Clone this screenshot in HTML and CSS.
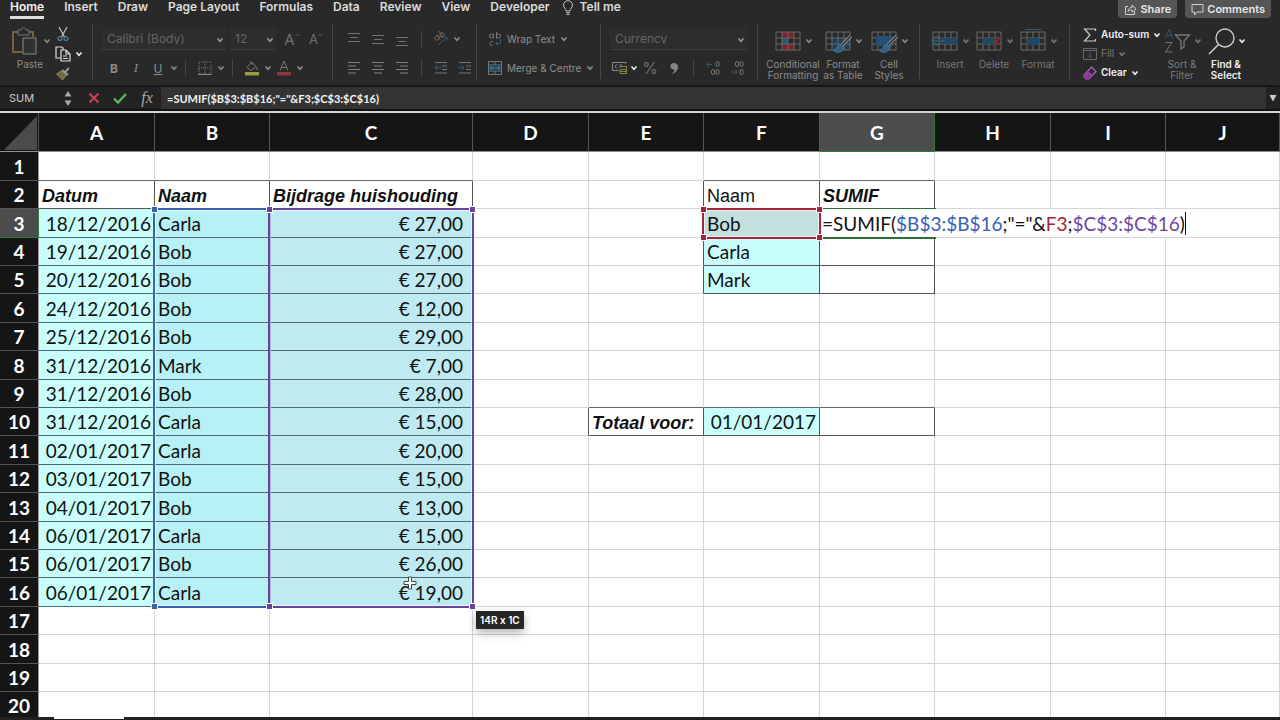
FILE: index.html
```html
<!DOCTYPE html>
<html lang="en">
<head>
<meta charset="utf-8">
<title>Workbook</title>
<link rel="stylesheet" href="styles.css">
</head>
<body>
<svg class="defs" aria-hidden="true">
  <symbol id="chev" viewBox="0 0 8 8"><path d="M1.500 2.500 4 5.200 6.500 2.500" fill="none" stroke="currentColor" stroke-width="1.600"/></symbol>
  <symbol id="grid" viewBox="0 0 28 24"><path d="M2 3h24v18H2zM2 9h24M2 15h24M8 3v18M14 3v18M20 3v18" fill="none" stroke="#6b6a66" stroke-width="1"/></symbol>
  <symbol id="brush" viewBox="0 0 28 24"><path d="M27 7 18 16" stroke="#8a8a8a" stroke-width="3.500"/><path d="M27 7 18 16" stroke="#2a2a2a" stroke-width="1.500"/><path d="M17.500 16c-4-1-4 4-8 5.500 4 3.500 9.500 1.500 10-3z" fill="#2f5f86" stroke="#4a7898" stroke-width="1"/></symbol>
</svg>

<nav class="tabs">
  <a class="tab active" href="#">Home</a><a class="tab" href="#">Insert</a><a class="tab" href="#">Draw</a><a class="tab" href="#">Page Layout</a><a class="tab" href="#">Formulas</a><a class="tab" href="#">Data</a><a class="tab" href="#">Review</a><a class="tab" href="#">View</a><a class="tab" href="#">Developer</a>
  <a class="tab tell" href="#"><svg width="12" height="16" viewBox="0 0 12 16"><path d="M4 11C4 9 1.500 8 1.500 5.200a4.500 4.500 0 0 1 9 0C10.500 8 8 9 8 11zM4 12.800h4M4.500 14.500h3" fill="none" stroke="#c4c4c4"/></svg>Tell me</a>
  <span class="grow"></span>
  <button class="pill"><svg width="13" height="13" viewBox="0 0 13 13"><path d="M4 3.500H1.500v8h9V8M4 8.500c.3-3 2-4 4-4V2l4 3.800-4 3.500V7C6 7 5 7.300 4 8.500z" fill="none" stroke="#d0d0d0"/></svg>Share</button>
  <button class="pill"><svg width="13" height="13" viewBox="0 0 13 13"><path d="M1 1.500h11v7.500H6l-2.500 3V9H1z" fill="none" stroke="#d0d0d0"/></svg>Comments</button>
</nav>

<div class="ribbon">
  <section class="group clip">
    <button class="big paste"><span class="pic"><svg width="30" height="30" viewBox="0 0 30 30"><path d="M12 26H3V6h20v5" fill="none" stroke="#76623a" stroke-width="2"/><path d="M8 9V4h3c0-3 5-3 5 0h3v5z" fill="#292929" stroke="#777"/><path d="M13 12h13v16H13z" fill="#303030" stroke="#8a8a8a"/></svg><svg class="chev"><use href="#chev"/></svg></span>Paste</button>
    <div class="stack">
      <button aria-label="Cut"><svg width="16" height="16" viewBox="0 0 16 16"><path d="M4 1l5.500 10M12 1 6.500 11" stroke="#bbb" stroke-width="1.300"/><g fill="none" stroke="#4179a5" stroke-width="1.400"><circle cx="5" cy="12.500" r="1.900"/><circle cx="11" cy="12.500" r="1.900"/></g></svg></button>
      <button class="on" aria-label="Copy"><svg width="16" height="16" viewBox="0 0 16 16"><path d="M6 12H1V1h6l1 1v2M6 4h5l4 4v7H6zM11 4v4h4M8 10h4M8 12.500h5" fill="none" stroke="#ddd" stroke-width="1.200"/></svg><svg class="chev"><use href="#chev"/></svg></button>
      <button aria-label="Format painter"><svg width="16" height="14" viewBox="0 0 16 14"><path d="M14 1 10 5M7 3l6 5" stroke="#999" stroke-width="2"/><path d="M6 4 1.500 7l6 6 4-5z" fill="#75683f" stroke="#8f8360"/></svg></button>
    </div>
  </section>

  <section class="group font">
    <div class="line">
      <label class="combo wide"><select aria-label="Font"><option>Calibri (Body)</option></select><svg class="chev"><use href="#chev"/></svg></label>
      <label class="combo size"><select aria-label="Font size"><option>12</option></select><svg class="chev"><use href="#chev"/></svg></label>
      <button class="w24 glyph" aria-label="Grow font">A<svg width="5" height="12" viewBox="0 0 5 12"><path d="M.5 3 2.500 1l2 2" fill="none" stroke="#426b86"/></svg></button>
      <button class="w24 glyph small" aria-label="Shrink font">A<svg width="5" height="12" viewBox="0 0 5 12"><path d="M.5 1 2.500 3l2-2" fill="none" stroke="#426b86"/></svg></button>
    </div>
    <div class="line">
      <button class="w24"><b>B</b></button><button class="w20"><i class="serif">I</i></button><button class="w24"><u>U</u></button><svg class="chev"><use href="#chev"/></svg><span class="bar"></span>
      <button class="w24" aria-label="Borders"><svg width="14" height="14" viewBox="0 0 14 14"><path d="M1 1h12v12H1zM7 1v12M1 7h12" fill="none" stroke="#777" stroke-dasharray="1 1"/><path d="M0 13.500h14" stroke="#888"/></svg></button><svg class="chev"><use href="#chev"/></svg><span class="bar"></span>
      <button class="w24" aria-label="Fill colour"><svg width="16" height="16" viewBox="0 0 16 16"><path d="M3 7.500 8 2l4 4.500-5 4zM6 1l3 4M13 7v3" fill="none" stroke="#777"/><path d="M1 12h14v3.500H1z" fill="#9b9c3e"/></svg></button><svg class="chev"><use href="#chev"/></svg>
      <button class="w24 fcol" aria-label="Font colour"><svg width="16" height="16" viewBox="0 0 16 16"><path d="m4 10.500 4-9.500 4 9.500M5.300 7.500h5.400" fill="none" stroke="#777"/><path d="M1 12h14v3.500H1z" fill="#8d363b"/></svg></button><svg class="chev"><use href="#chev"/></svg>
    </div>
  </section>

  <section class="group align">
    <div class="line">
      <button class="w24" aria-label="Top"><svg width="14" height="14" viewBox="0 0 14 14"><path d="M1 1.500h12M3 5.500h8M1 9.500h12" stroke="#747474"/></svg></button><button class="w24" aria-label="Middle"><svg width="14" height="14" viewBox="0 0 14 14"><path d="M1 3.500h12M3 7.500h8M1 11.500h12" stroke="#747474"/></svg></button><button class="w24" aria-label="Bottom"><svg width="14" height="14" viewBox="0 0 14 14"><path d="M1 5.500h12M3 9.500h8M1 13.500h12" stroke="#747474"/></svg></button><span class="bar"></span>
      <button class="w24" aria-label="Orientation"><svg width="16" height="16" viewBox="0 0 16 16"><g fill="none" stroke="#706b5b"><circle cx="4" cy="7" r="2.200"/><path d="M4 4.200l3 4"/><circle cx="9" cy="4" r="2.200"/><path d="M6 0l3.500 6"/></g><path d="M5 14 14 6M10.500 6H14v3.500" fill="none" stroke="#365a72"/></svg></button><svg class="chev"><use href="#chev"/></svg>
    </div>
    <div class="line">
      <button class="w24" aria-label="Left"><svg width="14" height="14" viewBox="0 0 14 14"><path d="M1 1.500h12M1 5h8M1 8.500h12M1 12h8" stroke="#808080"/></svg></button><button class="w24" aria-label="Centre"><svg width="14" height="14" viewBox="0 0 14 14"><path d="M1 1.500h12M3 5h8M1 8.500h12M3 12h8" stroke="#808080"/></svg></button><button class="w24" aria-label="Right"><svg width="14" height="14" viewBox="0 0 14 14"><path d="M1 1.500h12M5 5h8M1 8.500h12M5 12h8" stroke="#808080"/></svg></button><span class="bar"></span>
      <button class="w24" aria-label="Outdent"><svg width="14" height="14" viewBox="0 0 14 14"><path d="M1 1.500h12M8 5h5M8 8.500h5M1 12h12" stroke="#777"/><path d="M7 6.700H1M3.500 4 1 6.700l2.500 2.700" fill="none" stroke="#33617c"/></svg></button><button class="w24" aria-label="Indent"><svg width="14" height="14" viewBox="0 0 14 14"><path d="M1 1.500h12M8 5h5M8 8.500h5M1 12h12" stroke="#777"/><path d="M0 6.700h6M3.500 4 6 6.700 3.500 9.400" fill="none" stroke="#33617c"/></svg></button>
    </div>
  </section>

  <section class="group wrap">
    <div class="line"><button class="txt"><svg width="14" height="16" viewBox="0 0 14 16"><g fill="none" stroke="#777"><circle cx="3.500" cy="5" r="2"/><path d="M5.500 3v4.500M8.500 1v6.500"/><circle cx="10.500" cy="5" r="2"/><path d="M5 10.500c-4-1-4 5 0 4"/></g><path d="M12.500 8v4.500H8M10 10.500l-2 2 2 2" fill="none" stroke="#33617c"/></svg>Wrap Text<svg class="chev"><use href="#chev"/></svg></button></div>
    <div class="line"><button class="txt"><svg width="14" height="14" viewBox="0 0 14 14"><path d="M.5.5h13v13H.5zM.5 4h13M.5 10h13M7 .5V4M7 10v3.500" fill="none" stroke="#707c82"/><path d="M1 4.500h12v5H1z" fill="#1e435a"/><path d="M2 7h10M4 5 2 7l2 2M10 5l2 2-2 2" fill="none" stroke="#4e85a3"/></svg>Merge &amp; Centre<svg class="chev"><use href="#chev"/></svg></button></div>
  </section>

  <section class="group number">
    <div class="line"><label class="combo full"><select aria-label="Number format"><option>Currency</option></select><svg class="chev"><use href="#chev"/></svg></label></div>
    <div class="line">
      <button class="w20" aria-label="Currency"><svg width="16" height="14" viewBox="0 0 16 14"><path d="M14 3V1.500H.5v8H7M5.500 4c-3-1-3 4 0 3M8 7V4h2" fill="none" stroke="#8a8a8a"/><path d="M9 5.500h5.500v7H8v-4h6.500M8 10.500h6" fill="none" stroke="#8d8450"/></svg></button><svg class="chev on"><use href="#chev"/></svg>
      <button class="w24 glyph pct">%</button><button class="w24 comma" aria-label="Comma"><svg width="9" height="13" viewBox="0 0 9 13"><path d="M1 12c2.500-1.500 3.500-3 3.500-4.500C-1 8-1 1 4 1c6 0 5.500 9.500-3 11z" fill="#858585"/></svg></button><span class="bar"></span>
      <button class="w24 dec" aria-label="More decimals"><svg width="14" height="16" viewBox="0 0 14 16"><path d="M6 4.500H1M3 2 1 4.500 3 7" fill="none" stroke="#33617c"/><g fill="none" stroke="#777"><rect x="10" y="1.500" width="3" height="5" rx="1.500"/><rect x="5.500" y="9.500" width="3" height="5" rx="1.500"/><rect x="10" y="9.500" width="3" height="5" rx="1.500"/></g></svg></button><button class="w24 dec" aria-label="Fewer decimals"><svg width="14" height="16" viewBox="0 0 14 16"><path d="M1 12h6M5 9.500 7 12l-2 2.500" fill="none" stroke="#33617c"/><g fill="none" stroke="#777"><rect x="5.500" y="1.500" width="3" height="5" rx="1.500"/><rect x="10" y="1.500" width="3" height="5" rx="1.500"/><rect x="10" y="9.500" width="3" height="5" rx="1.500"/></g></svg></button>
    </div>
  </section>

  <section class="group styles">
    <button class="big cond"><span class="pic"><svg width="28" height="24"><path d="M8 3h12v6H8zM8 15h12v6H8z" fill="#7d202b"/><path d="M8 9h6v6H8z" fill="#225777"/><use href="#grid"/></svg><svg class="chev"><use href="#chev"/></svg></span>Conditional<br>Formatting</button>
    <button class="big mid"><span class="pic"><svg width="28" height="24"><path d="M8 9h18v12H8z" fill="#1b3f5c"/><use href="#grid"/><use href="#brush"/></svg><svg class="chev"><use href="#chev"/></svg></span>Format<br>as Table</button>
    <button class="big mid"><span class="pic"><svg width="28" height="24"><use href="#grid"/><path d="M6 7h17v10H6z" fill="#254f75"/><use href="#brush"/></svg><svg class="chev"><use href="#chev"/></svg></span>Cell<br>Styles</button>
  </section>

  <section class="group cells dim">
    <button class="big mid"><span class="pic"><svg width="28" height="24"><use href="#grid"/><path d="M10 9h17v6H10z" fill="#204865"/><path d="M14 12H1M6 7l-5 5 5 5" fill="none" stroke="#2d5f7b" stroke-width="1.500"/></svg><svg class="chev"><use href="#chev"/></svg></span>Insert</button>
    <button class="big mid"><span class="pic"><svg width="28" height="24"><use href="#grid"/><path d="M7 9h12v6H7z" fill="#204865"/><path d="m18 8 8 9m0-9-8 9" stroke="#722b37" stroke-width="1.500"/></svg><svg class="chev"><use href="#chev"/></svg></span>Delete</button>
    <button class="big mid"><span class="pic"><svg width="28" height="24"><use href="#grid"/><path d="M8 9h12v7H8z" fill="#204865"/><path d="M6 .5h16" stroke="#2d5f7b"/></svg><svg class="chev"><use href="#chev"/></svg></span>Format</button>
  </section>

  <section class="group edit">
    <div class="actions">
      <button class="txt on"><svg width="14" height="14" viewBox="0 0 14 14"><path d="M12.500 3V1H1.500L7 7l-5.500 6h11v-2" fill="none" stroke="#ccc" stroke-width="1.200"/></svg>Auto-sum<svg class="chev"><use href="#chev"/></svg></button>
      <button class="txt dim"><svg width="14" height="14" viewBox="0 0 14 14"><path d="M.5 1.500h13v11H.5zM.5 3.500h13" fill="none" stroke="#686868"/><path d="M7 4.500v6M5 8.500l2 2 2-2" fill="none" stroke="#35607b"/></svg>Fill<svg class="chev"><use href="#chev"/></svg></button>
      <button class="txt on"><svg width="14" height="14" viewBox="0 0 14 14"><path d="M8.500 1 13 5.500 6 13H3L1 10.500V9z" fill="none" stroke="#b06ab8" stroke-width="1.200"/><path d="m5 4.800 5 4L6 13H3L1 10.500V9z" fill="#8f389c"/></svg>Clear<svg class="chev"><use href="#chev"/></svg></button>
    </div>
    <button class="big mid dim"><span class="pic"><svg width="28" height="26" viewBox="0 0 28 26"><path d="m2 11 4-10 4 10M3.500 7.500h5" fill="none" stroke="#32596f"/><path d="M2.500 14.500h6.500L2.500 24H9.500" fill="none" stroke="#777"/><path d="M12.500 7h14l-5.500 6v6l-3 2v-8z" fill="none" stroke="#777" stroke-width="1.300"/></svg><svg class="chev"><use href="#chev"/></svg></span>Sort &amp;<br>Filter</button>
    <button class="big mid on"><span class="pic"><svg width="28" height="28" viewBox="0 0 28 28"><circle cx="18" cy="11" r="9" fill="none" stroke="#ccc" stroke-width="1.400"/><path d="M11.500 17.500 2 27" stroke="#ccc" stroke-width="1.600"/></svg><svg class="chev"><use href="#chev"/></svg></span>Find &amp;<br>Select</button>
  </section>
</div>

<div class="fbar">
  <div class="namebox"><input aria-label="Name box" value="SUM"><svg width="8" height="17" viewBox="0 0 8 17"><path d="M4 1l3.500 5.500h-7zM4 16 .5 10.500h7z" fill="#aaa"/></svg></div>
  <button aria-label="Cancel"><svg width="12" height="12" viewBox="0 0 12 12"><path d="m1.500 1.500 9 9m0-9-9 9" stroke="#c9414d" stroke-width="2.200"/></svg></button>
  <button aria-label="Enter"><svg width="14" height="12" viewBox="0 0 14 12"><path d="m1 6.500 4 4L13 2" fill="none" stroke="#5cb85a" stroke-width="2.400"/></svg></button>
  <button class="fx" aria-label="Insert function">fx</button>
  <input class="formula" aria-label="Formula" value='=SUMIF($B$3:$B$16;"="&amp;F3;$C$3:$C$16)'>
  <button class="expand" aria-label="Expand"><svg width="8" height="8" viewBox="0 0 8 8"><path d="M.5 1h7L4 7.500z" fill="#ccc"/></svg></button>
</div>

<main class="sheet">
<table>
<colgroup><col class="c0"><col class="even"><col class="odd"><col class="c3"><col class="even"><col class="odd"><col class="even"><col class="odd"><col class="even"><col class="odd"><col></colgroup>
<thead><tr><th class="corner"><svg width="33" height="34" viewBox="0 0 33 34"><path d="M33 0v34H0z" fill="#4b4b4b"/></svg></th><th>A</th><th>B</th><th>C</th><th>D</th><th>E</th><th>F</th><th class="cur">G</th><th>H</th><th>I</th><th>J</th></tr></thead>
<tbody>
<tr><th>1</th><td class="u"></td><td class="u"></td><td class="u"></td><td></td><td></td><td class="u"></td><td class="u"></td><td></td><td></td><td></td></tr>
<tr class="titles"><th>2</th><td class="k">Datum</td><td class="k">Naam</td><td class="k">Bijdrage huishouding</td><td></td><td class="s"></td><td class="k plain">Naam</td><td class="k">SUMIF</td><td></td><td></td><td></td></tr>
<tr><th class="cur">3</th><td class="a">18/12/2016</td><td class="b">Carla<span class="range blue"><i></i><i></i><i></i><i></i></span></td><td class="c">€ 27,00<span class="range purple"><i></i><i></i><i></i><i></i></span></td><td></td><td class="s"></td><td class="f picked">Bob<span class="range red"><i></i><i></i><i></i><i></i></span></td><td class="editing" colspan="4"><span class="caret">=SUMIF(<span class="tb">$B$3:$B$16</span>;"="&amp;<span class="tr">F3</span>;<span class="tp">$C$3:$C$16</span>)</span><span class="cellframe"></span></td></tr>
<tr><th>4</th><td class="a">19/12/2016</td><td class="b">Bob</td><td class="c">€ 27,00</td><td></td><td class="s"></td><td class="f">Carla</td><td class="k"></td><td></td><td></td><td></td></tr>
<tr><th>5</th><td class="a">20/12/2016</td><td class="b">Bob</td><td class="c">€ 27,00</td><td></td><td class="s"></td><td class="f">Mark</td><td class="k"></td><td></td><td></td><td></td></tr>
<tr><th>6</th><td class="a">24/12/2016</td><td class="b">Bob</td><td class="c">€ 12,00</td><td></td><td></td><td></td><td></td><td></td><td></td><td></td></tr>
<tr><th>7</th><td class="a">25/12/2016</td><td class="b">Bob</td><td class="c">€ 29,00</td><td></td><td></td><td></td><td></td><td></td><td></td><td></td></tr>
<tr><th>8</th><td class="a">31/12/2016</td><td class="b">Mark</td><td class="c">€ 7,00</td><td></td><td></td><td></td><td></td><td></td><td></td><td></td></tr>
<tr><th>9</th><td class="a">31/12/2016</td><td class="b">Bob</td><td class="c">€ 28,00</td><td></td><td class="u"></td><td class="u"></td><td class="u"></td><td></td><td></td><td></td></tr>
<tr><th>10</th><td class="a">31/12/2016</td><td class="b">Carla</td><td class="c">€ 15,00</td><td class="s"></td><td class="k title">Totaal voor:</td><td class="f date">01/01/2017</td><td class="k"></td><td></td><td></td><td></td></tr>
<tr><th>11</th><td class="a">02/01/2017</td><td class="b">Carla</td><td class="c">€ 20,00</td><td></td><td></td><td></td><td></td><td></td><td></td><td></td></tr>
<tr><th>12</th><td class="a">03/01/2017</td><td class="b">Bob</td><td class="c">€ 15,00</td><td></td><td></td><td></td><td></td><td></td><td></td><td></td></tr>
<tr><th>13</th><td class="a">04/01/2017</td><td class="b">Bob</td><td class="c">€ 13,00</td><td></td><td></td><td></td><td></td><td></td><td></td><td></td></tr>
<tr><th>14</th><td class="a">06/01/2017</td><td class="b">Carla</td><td class="c">€ 15,00</td><td></td><td></td><td></td><td></td><td></td><td></td><td></td></tr>
<tr><th>15</th><td class="a">06/01/2017</td><td class="b">Bob</td><td class="c">€ 26,00</td><td></td><td></td><td></td><td></td><td></td><td></td><td></td></tr>
<tr><th>16</th><td class="a">06/01/2017</td><td class="b">Carla</td><td class="c">€ 19,00<svg class="pointer" width="14" height="14" viewBox="0 0 14 14"><path d="M5.500 1h3v4.500H13v3H8.500V13h-3V8.500H1v-3h4.500z" fill="#fff" stroke="#444"/></svg></td><td></td><td></td><td></td><td></td><td></td><td></td><td></td></tr>
<tr><th>17</th><td></td><td></td><td></td><td class="tipcell"><span class="tip">14R x 1C</span></td><td></td><td></td><td></td><td></td><td></td><td></td></tr>
<tr><th>18</th><td></td><td></td><td></td><td></td><td></td><td></td><td></td><td></td><td></td><td></td></tr>
<tr><th>19</th><td></td><td></td><td></td><td></td><td></td><td></td><td></td><td></td><td></td><td></td></tr>
<tr><th>20</th><td></td><td></td><td></td><td></td><td></td><td></td><td></td><td></td><td></td><td></td></tr>
</tbody>
</table>
</main>
<footer class="sheets"><span></span></footer>
</body>
</html>
```
FILE: styles.css
```css
* { box-sizing: border-box; }
body { margin: 0; height: 100vh; display: flex; flex-direction: column; overflow: hidden; background: #292929; color: #8c8c8c; font: 10px/11px Inter, "Liberation Sans", sans-serif; }
button, input, select { font: inherit; color: inherit; background: none; border: 0; padding: 0; margin: 0; border-radius: 0; outline: 0; }
svg { flex: none; display: block; }
.defs { position: absolute; width: 0; height: 0; }
.chev { width: 8px; height: 8px; }
.on { color: #f0f0f0; font-weight: 600; }
.dim { color: #7a7a7a; }

.tabs { flex: none; display: flex; align-items: flex-start; gap: 20px; height: 22px; padding: 0 9px 0 10px; font-size: 12px; line-height: 14px; font-weight: 600; }
.tab { color: #dcdcdc; text-decoration: none; white-space: nowrap; padding-bottom: 2px; }
.tab.active { color: #f4f4f4; border-bottom: 3px solid #ddd; }
.tell { display: flex; gap: 6px; margin-left: -8px; }
.grow { flex: 1; }
.pill { display: flex; align-items: center; gap: 3px; height: 18px; padding: 0 6px; background: #555; color: #e8e8e8; border-radius: 0 0 4px 4px; font-size: 11px; }
.pill + .pill { margin-left: -12px; }

.ribbon { flex: none; display: flex; height: 65px; border-bottom: 2px solid #171717; }
.group { flex: none; position: relative; padding: 6px 0 0 9px; }
.group:not(:last-child)::after { content: ""; position: absolute; right: 0; top: 2px; width: 1px; height: 55px; background: #484848; }
.line { display: flex; align-items: center; height: 22px; margin-bottom: 7px; }
.line button { display: flex; align-items: center; justify-content: center; height: 22px; }
.w20 { width: 20px; }
.w24 { width: 24px; }
.bar { width: 1px; height: 16px; background: #484848; margin: 0 7px; }
.combo { position: relative; display: block; height: 22px; background: #2d2d2d; border-bottom: 1px solid #3c3c3c; color: #666; font-size: 12px; }
.combo select { appearance: none; width: 100%; height: 21px; padding-left: 5px; opacity: 1; }
.combo .chev { position: absolute; right: 2px; top: 8px; color: #999; }
.wide { width: 124px; margin-right: 4px; }
.size { width: 46px; margin-right: 4px; }
.full { width: 137px; }
.glyph { font-size: 15px; color: #707070; }
.small { font-size: 13px; }
.pct { font-size: 16px; }
.serif { font: italic 13px "Liberation Serif", serif; }
.font b, .font u { font-size: 12px; }
.clip { width: 93px; display: flex; padding-left: 11px; }
.font { width: 240px; }
.align { width: 144px; }
.wrap { width: 124px; padding-left: 11px; }
.number { width: 157px; }
.styles { width: 162px; padding-left: 8px; display: flex; }
.cells { width: 150px; padding-left: 8px; display: flex; }
.edit { flex: 1; display: flex; padding-left: 13px; }
.big { flex: none; align-self: flex-start; line-height: 11px; white-space: nowrap; text-align: center; }
.pic { display: flex; align-items: center; justify-content: center; gap: 3px; height: 26px; margin-bottom: 5px; }
.paste { width: 38px; }
.cond { width: 54px; }
.mid { width: 44px; }
.styles .mid { width: 46px; }
.stack { display: flex; flex-direction: column; gap: 4px; margin: -2px 0 0 6px; }
.stack button { display: flex; align-items: center; gap: 4px; height: 16px; }
.txt { display: flex; align-items: center; gap: 5px; white-space: nowrap; }
.actions { display: flex; flex-direction: column; gap: 6px; width: 77px; }
.actions .txt { height: 13px; gap: 4px; }
.wrap .txt { color: #909090; }

.fbar { flex: none; display: flex; align-items: center; height: 26px; background: #222; border-bottom: 2px solid #d4d4d4; box-shadow: inset 0 -2px #111; padding-bottom: 2px; }
.fbar button { width: 26px; height: 22px; display: flex; align-items: center; justify-content: center; }
.namebox { display: flex; align-items: center; justify-content: space-between; width: 81px; height: 22px; padding: 0 9px; color: #ccc; font-size: 11px; }
.namebox input { width: 40px; }
.fbar .fx { width: 28px; font: italic 16px "Liberation Serif", serif; color: #aaa; }
.formula { flex: 1; min-width: 0; height: 22px; padding-left: 6px; background: #333; color: #f2f2f2; font: bold 11px Lato, sans-serif; }
.fbar .expand { width: 14px; }

.sheet { flex: 1; min-height: 0; overflow: hidden; background: #fff; color: #111; font: 19px/22px Lato, sans-serif; }
table { table-layout: fixed; width: 100%; border-collapse: separate; border-spacing: 0; }
.c0 { width: 39px; }
.c3 { width: 203px; }
.even { width: 116px; }
.odd { width: 115px; }
thead tr { height: 39px; }
tbody tr { height: 28px; }
tbody tr:nth-child(5n+1), tbody tr:nth-child(5n+3) { height: 29px; }
th, td { padding: 1px 2px 0; border: solid #d5d5d5; border-width: 0 1px 1px 0; white-space: nowrap; }
th { background: #151515; color: #fff; font-weight: bold; border-color: #555; padding: 1px 0 0; }
thead th { border-bottom-color: #8f8f8f; }
tbody th { border-right-color: #999; }
th.cur { background: #4c4c4c; border-color: #2f7a3a; }
.corner svg { margin-left: 4px; }
.u { border-bottom-color: #666; }
.s { border-right-color: #555; }
.k, .a, .b, .c, .f { border-color: #555; }
.titles td, .title { font: italic bold 18px/22px "Liberation Sans", sans-serif; padding: 2px 3px 0; }
.titles .plain { font-style: normal; font-weight: normal; }
.a { background: #c8fffc; text-align: right; }
.b { background: #b7f0f5; position: relative; }
.c { background: #bfeaf2; text-align: right; padding-right: 9px; position: relative; }
.b, .c, .a { border-color: #4f6b72; }
.a, .date { padding-right: 3px; }
.b, .f { padding-left: 3px; }
.f { background: #c8fffc; }
.date { text-align: right; }
.picked { background: #c3e0df; position: relative; }
.range { position: absolute; z-index: 2; left: -2px; right: -2px; top: -1px; height: 400px; border: 2px solid; box-shadow: inset 0 0 0 1px rgba(255,255,255,.6); }
.blue { color: #3b62ad; }
.purple { color: #68439a; z-index: 3; }
.red { color: #a8233a; height: 31px; }
.range i { position: absolute; width: 5px; height: 5px; background: currentColor; outline: 1px solid #fff; left: -3px; top: -3px; }
.range i:nth-child(2n) { left: auto; right: -3px; }
.range i:nth-child(n+3) { top: auto; bottom: -3px; }
.editing { position: relative; }
.caret { border-right: 1px solid #111; }
.tb { color: #3660b5; }
.tr { color: #a8233a; }
.tp { color: #6c479e; }
.cellframe { position: absolute; left: 0; top: -1px; width: 116px; height: 31px; border: solid #2e6f38; border-width: 1px 0 2px; }
.pointer { position: absolute; right: 55px; top: -2px; }
.tipcell { position: relative; }
.tip { position: absolute; left: 3px; top: 4px; padding: 3px 4px; background: #262626; color: #fff; font: 600 10px/12px Inter, sans-serif; box-shadow: 0 4px 10px rgba(0,0,0,.3); }

.sheets { flex: none; height: 3px; background: #222; padding-left: 54px; }
.sheets span { display: block; width: 70px; height: 2px; background: #fff; }
```
